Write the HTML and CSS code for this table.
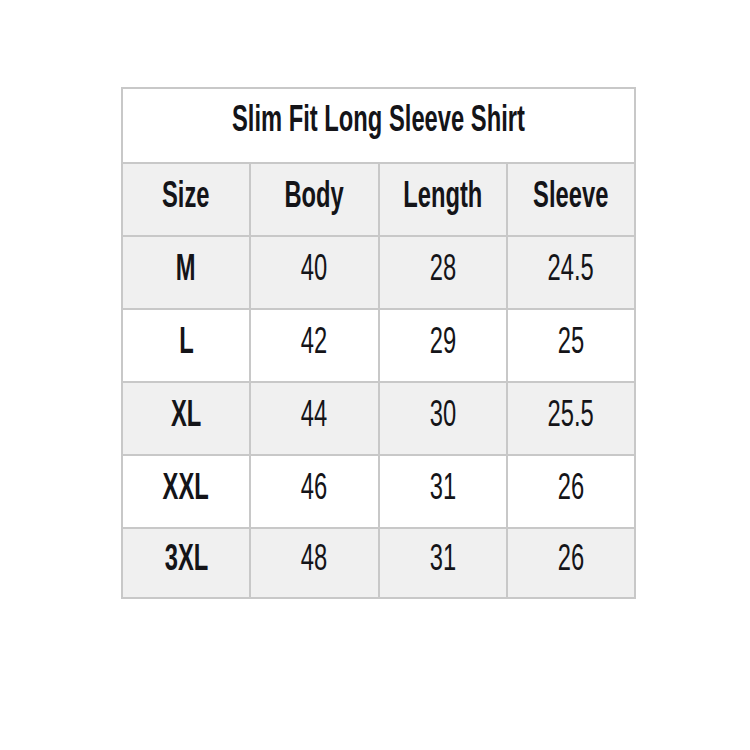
FILE: index.html
```html
<!DOCTYPE html>
<html lang="en">
<head>
<meta charset="utf-8">
<title>Slim Fit Long Sleeve Shirt</title>
<link rel="stylesheet" href="styles.css">
</head>
<body>
<div class="chart">
  <div class="cell title"><span>Slim Fit Long Sleeve Shirt</span></div>

  <div class="cell gray bold"><span>Size</span></div>
  <div class="cell gray bold"><span>Body</span></div>
  <div class="cell gray bold"><span>Length</span></div>
  <div class="cell gray bold"><span>Sleeve</span></div>

  <div class="cell gray bold"><span>M</span></div>
  <div class="cell gray"><span>40</span></div>
  <div class="cell gray"><span>28</span></div>
  <div class="cell gray"><span>24.5</span></div>

  <div class="cell bold"><span>L</span></div>
  <div class="cell"><span>42</span></div>
  <div class="cell"><span>29</span></div>
  <div class="cell"><span>25</span></div>

  <div class="cell gray bold"><span>XL</span></div>
  <div class="cell gray"><span>44</span></div>
  <div class="cell gray"><span>30</span></div>
  <div class="cell gray"><span>25.5</span></div>

  <div class="cell bold"><span>XXL</span></div>
  <div class="cell"><span>46</span></div>
  <div class="cell"><span>31</span></div>
  <div class="cell"><span>26</span></div>

  <div class="cell gray bold"><span>3XL</span></div>
  <div class="cell gray"><span>48</span></div>
  <div class="cell gray"><span>31</span></div>
  <div class="cell gray"><span>26</span></div>
</div>
</body>
</html>
```
FILE: styles.css
```css
html, body {
  margin: 0;
  padding: 0;
  background: #ffffff;
}

body {
  width: 750px;
  height: 750px;
  font-family: "Liberation Sans", Arial, sans-serif;
  color: #141418;
}

.chart {
  margin: 87px 0 0 121px;
  width: 515px;
  box-sizing: border-box;
  display: grid;
  grid-template-columns: repeat(4, 1fr);
  grid-template-rows: 73px 71px 71px 71px 71px 71px 68px;
  gap: 2px;
  padding: 2px;
  background: #c8c8c8;
}

.cell {
  background: #ffffff;
  display: flex;
  align-items: center;
  justify-content: center;
  padding-bottom: 10px;
  box-sizing: border-box;
  overflow: visible;
}

.cell span {
  display: inline-block;
  font-size: 37.7px;
  line-height: 1;
  white-space: nowrap;
  transform: scaleX(0.63);
}

.title {
  grid-column: 1 / -1;
  padding-bottom: 14px;
}

.title span,
.bold span {
  font-weight: bold;
}

.gray {
  background: #f0f0f0;
}
```
